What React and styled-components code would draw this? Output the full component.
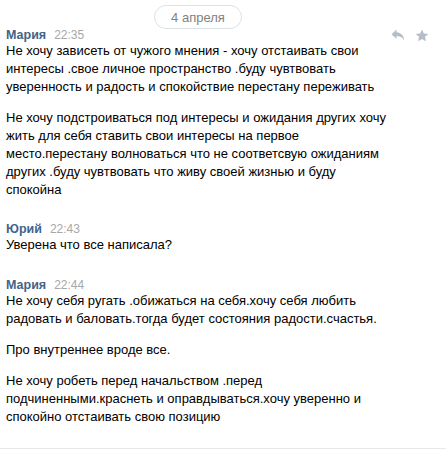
import React from "react";
import styled, { createGlobalStyle } from "styled-components";

const GlobalStyle = createGlobalStyle`
  html, body { margin: 0; padding: 0; background: #ffffff; }
  body { font-family: "Liberation Sans", Arial, sans-serif; -webkit-font-smoothing: antialiased; }
`;

const Feed = styled.div`
  width: 446px;
  height: 451px;
  box-sizing: border-box;
  display: flex;
  flex-direction: column;
  background: #fff;
  overflow: hidden;
`;

const DateRow = styled.div`
  display: flex;
  justify-content: center;
  padding: 5px 50px 0 0;
  margin-bottom: -1px;
`;

const DatePill = styled.div`
  height: 24px;
  box-sizing: border-box;
  padding: 0 16px;
  border: 1px solid #dce1e6;
  border-radius: 12px;
  display: flex;
  align-items: center;
  font-size: 13px;
  color: #828282;
  background: #fff;
`;

const Group = styled.div`
  display: flex;
  flex-direction: column;
  padding: 0 17px 0 6px;
  margin-top: ${(p) => p.$gap}px;
`;

const Header = styled.div`
  display: flex;
  align-items: center;
  height: 14px;
  gap: 8px;
`;

const Name = styled.span`
  font-weight: bold;
  font-size: 12.5px;
  color: #42648b;
`;

const Time = styled.span`
  font-size: 12px;
  color: #a8a8a8;
`;

const Actions = styled.div`
  margin-left: auto;
  display: flex;
  align-items: center;
  gap: 10px;
  color: #b4bdc8;
`;

const Body = styled.div`
  display: flex;
  flex-direction: column;
  gap: 13px;
`;

const Para = styled.div`
  font-size: 13px;
  line-height: 18px;
  color: #000;
  white-space: nowrap;
`;

const Line = styled.span`
  display: block;
`;

const Footer = styled.div`
  margin-top: auto;
  margin-bottom: 2px;
  border-top: 1px solid #e7e8ec;
`;

const ReplyIcon = () => (
  <svg width="14" height="12" viewBox="0 0 14 12" fill="currentColor">
    <path d="M5.5 0.5 L0.5 5.2 L5.5 9.8 L5.5 7 C8.8 7 11.2 8.2 13.2 11.2 C12.6 6.8 10.2 3.6 5.5 3.3 Z" />
  </svg>
);

const StarIcon = () => (
  <svg width="14" height="13" viewBox="0 0 24 23" fill="currentColor">
    <path d="M12 0.8 L15.3 7.8 L23 8.7 L17.3 13.9 L18.9 21.5 L12 17.6 L5.1 21.5 L6.7 13.9 L1 8.7 L8.7 7.8 Z" />
  </svg>
);

const messages = [
  {
    name: "Мария",
    time: "22:35",
    actions: true,
    gap: 0,
    paras: [
      [
        "Не хочу зависеть от чужого мнения - хочу отстаивать свои",
        "интересы .свое личное пространство .буду чувтвовать",
        "уверенность и радость и спокойствие перестану переживать",
      ],
      [
        "Не хочу подстроиваться под интересы и ожидания других хочу",
        "жить для себя ставить свои интересы на первое",
        "место.перестану волноваться что не соответсвую ожиданиям",
        "других .буду чувтвовать что живу своей жизнью и буду",
        "спокойна",
      ],
    ],
  },
  {
    name: "Юрий",
    time: "22:43",
    gap: 23,
    paras: [["Уверена что все написала?"]],
  },
  {
    name: "Мария",
    time: "22:44",
    gap: 24,
    paras: [
      [
        "Не хочу себя ругать .обижаться на себя.хочу себя любить",
        "радовать и баловать.тогда будет состояния радости.счастья.",
      ],
      ["Про внутреннее вроде все."],
      [
        "Не хочу робеть перед начальством .перед",
        "подчиненными.краснеть и оправдываться.хочу уверенно и",
        "спокойно отстаивать свою позицию",
      ],
    ],
  },
];

export default function App() {
  return (
    <>
      <GlobalStyle />
      <Feed>
        <DateRow>
          <DatePill>4 апреля</DatePill>
        </DateRow>
        {messages.map((m, i) => (
          <Group key={i} $gap={m.gap}>
            <Header>
              <Name>{m.name}</Name>
              <Time>{m.time}</Time>
              {m.actions && (
                <Actions>
                  <ReplyIcon />
                  <StarIcon />
                </Actions>
              )}
            </Header>
            <Body>
              {m.paras.map((p, j) => (
                <Para key={j}>
                  {p.map((l, k) => (
                    <Line key={k}>{l}</Line>
                  ))}
                </Para>
              ))}
            </Body>
          </Group>
        ))}
        <Footer />
      </Feed>
    </>
  );
}
